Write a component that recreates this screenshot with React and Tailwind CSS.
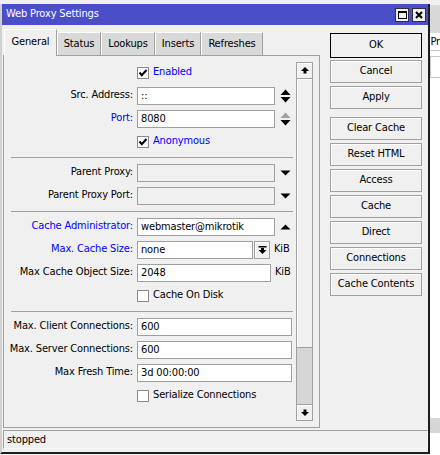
// Winbox-style "Web Proxy Settings" dialog

function Check({ on }) {
  return (
    <div className="w-[12px] h-[12px] border border-[#8a8a8a] bg-white flex items-center justify-center">
      {on && (
        <svg width="10" height="10" viewBox="0 0 10 10">
          <polyline points="1.5,4.5 3.8,7.2 8.5,2" fill="none" stroke="#000" strokeWidth="2" />
        </svg>
      )}
    </div>
  );
}

function UpDown({ upGray }) {
  return (
    <svg width="11" height="14" viewBox="0 0 11 14">
      <polygon points="0.5,6 5.5,0.5 10.5,6" fill={upGray ? "#a0a0a0" : "#000"} />
      <polygon points="0.5,8 5.5,13.5 10.5,8" fill="#000" />
    </svg>
  );
}

function Tri({ down }) {
  return (
    <svg width="11" height="6" viewBox="0 0 11 6">
      {down ? <polygon points="0.5,0.5 10.5,0.5 5.5,5.5" fill="#000" /> : <polygon points="0.5,5.5 10.5,5.5 5.5,0.5" fill="#000" />}
    </svg>
  );
}

function ScrollArrow({ down }) {
  return (
    <svg width="8" height="7" viewBox="0 0 8 7" className={down ? "rotate-180" : ""}>
      <polygon points="0,4 4,0 8,4" fill="#000" />
      <rect x="2.5" y="3.5" width="3" height="3" fill="#000" />
    </svg>
  );
}

function Label({ children, blue }) {
  return (
    <div className={`w-[129px] text-right whitespace-nowrap ${blue ? "text-[#0000ff]" : "text-black"}`}>{children}</div>
  );
}

function Field({ className, value, disabled }) {
  return (
    <div
      className={`h-[18px] border border-[#a0a0a0] px-[3px] leading-[16px] whitespace-nowrap overflow-hidden ${
        disabled ? "bg-[#f0f0f0]" : "bg-white"
      } ${className}`}
    >
      {value}
    </div>
  );
}

function CheckRow({ label, on, blue }) {
  return (
    <div className="flex items-center h-[23px]">
      <div className="w-[133px]" />
      <Check on={on} />
      <span className={`ml-[4px] ${blue ? "text-[#0000ff]" : "text-black"}`}>{label}</span>
    </div>
  );
}

function Sep() {
  return (
    <div className="h-[8px] flex items-center">
      <div className="ml-[7px] w-[282px] h-[1px] bg-[#a0a0a0]" />
    </div>
  );
}

function Btn({ children, ok, className = "" }) {
  return (
    <div
      className={`flex items-center justify-center bg-[#f0f0f0] border ${
        ok ? "h-[25px] border-black" : "h-[23px] border-[#a0a0a0] shadow-[inset_1px_1px_0_#fff]"
      } ${className}`}
    >
      {children}
    </div>
  );
}

export default function App() {
  const tabs = [
    { name: "Status", w: "w-[44px]" },
    { name: "Lookups", w: "w-[54px]" },
    { name: "Inserts", w: "w-[46px]" },
    { name: "Refreshes", w: "w-[62px]" },
  ];

  return (
    <div className="w-[440px] h-[455px] overflow-hidden bg-[#f0f0f0] flex font-['DejaVu_Sans_Condensed','DejaVu_Sans',sans-serif] text-[11px] tracking-[-0.15px] text-black">
      {/* dialog window */}
      <div className="mt-[4px] w-[433px] h-[450px] flex flex-col bg-[#f0f0f0] border-l-2 border-l-[#d0d0d0] border-r-2 border-r-[#1e1e1e] border-b-2 border-b-[#1e1e1e]">
        {/* title bar */}
        <div className="h-[21px] bg-[#4a4ec8] flex items-center pl-[4px] pr-[2px]">
          <span className="text-white flex-1">Web Proxy Settings</span>
          <div className="w-[14px] h-[14px] bg-[#f0f0f0] border border-[#303030] flex items-center justify-center">
            <div className="w-[9px] h-[8px] border border-black border-t-2" />
          </div>
          <div className="ml-[3px] w-[14px] h-[14px] bg-[#f0f0f0] border border-[#303030] flex items-center justify-center">
            <svg width="8" height="8" viewBox="0 0 8 8">
              <path d="M1 1 L7 7 M7 1 L1 7" stroke="#000" strokeWidth="2" />
            </svg>
          </div>
        </div>

        {/* main area */}
        <div className="h-[403px] flex pl-[1px]">
          <div className="w-[317px] flex flex-col pt-[4px]">
            {/* tabs */}
            <div className="h-[26px] flex pl-[1px] items-start">
              <div className="relative z-10 w-[53px] h-[27px] bg-[#f0f0f0] border-l border-t border-white border-r border-r-[#a0a0a0] flex items-center justify-center pb-[1px]">
                General
              </div>
              {tabs.map((t) => (
                <div
                  key={t.name}
                  className={`${t.w} mt-[3px] h-[23px] bg-[#d9d9d9] border-l border-t border-white border-r border-r-[#a0a0a0] flex items-center justify-center`}
                >
                  {t.name}
                </div>
              ))}
            </div>

            {/* panel */}
            <div className="h-[373px] border border-[#a0a0a0] flex">
              <div className="w-[292px] flex flex-col pt-[5px]">
                <CheckRow label="Enabled" on blue />
                <div className="flex items-center h-[23px]">
                  <Label>Src. Address:</Label>
                  <Field className="ml-[4px] w-[138px]" value="::" />
                  <div className="ml-[5px] flex">
                    <UpDown />
                  </div>
                </div>
                <div className="flex items-center h-[23px]">
                  <Label blue>Port:</Label>
                  <Field className="ml-[4px] w-[138px]" value="8080" />
                  <div className="ml-[5px] flex">
                    <UpDown upGray />
                  </div>
                </div>
                <CheckRow label="Anonymous" on blue />
                <Sep />
                <div className="flex items-center h-[23px]">
                  <Label>Parent Proxy:</Label>
                  <Field className="ml-[4px] w-[138px]" value="" disabled />
                  <div className="ml-[5px] flex">
                    <Tri down />
                  </div>
                </div>
                <div className="flex items-center h-[23px]">
                  <Label>Parent Proxy Port:</Label>
                  <Field className="ml-[4px] w-[138px]" value="" disabled />
                  <div className="ml-[5px] flex">
                    <Tri down />
                  </div>
                </div>
                <Sep />
                <div className="flex items-center h-[23px]">
                  <Label blue>Cache Administrator:</Label>
                  <Field className="ml-[4px] w-[138px]" value="webmaster@mikrotik" />
                  <div className="ml-[5px] flex">
                    <Tri />
                  </div>
                </div>
                <div className="flex items-center h-[23px]">
                  <Label blue>Max. Cache Size:</Label>
                  <Field className="ml-[4px] w-[116px]" value="none" />
                  <div className="ml-[1px] w-[16px] h-[18px] border border-[#a0a0a0] bg-[#f0f0f0] shadow-[inset_1px_1px_0_#fff] flex items-center justify-center">
                    <svg width="9" height="8" viewBox="0 0 9 8">
                      <rect x="0.5" y="0" width="8" height="1.5" fill="#000" />
                      <rect x="3" y="2" width="3" height="2.5" fill="#000" />
                      <polygon points="0.5,4 8.5,4 4.5,8" fill="#000" />
                    </svg>
                  </div>
                  <span className="ml-[4px]">KiB</span>
                </div>
                <div className="flex items-center h-[23px]">
                  <Label>Max Cache Object Size:</Label>
                  <Field className="ml-[4px] w-[134px]" value="2048" />
                  <span className="ml-[4px]">KiB</span>
                </div>
                <CheckRow label="Cache On Disk" />
                <Sep />
                <div className="flex items-center h-[23px]">
                  <Label>Max. Client Connections:</Label>
                  <Field className="ml-[4px] w-[155px]" value="600" />
                </div>
                <div className="flex items-center h-[23px]">
                  <Label>Max. Server Connections:</Label>
                  <Field className="ml-[4px] w-[155px]" value="600" />
                </div>
                <div className="flex items-center h-[23px]">
                  <Label>Max Fresh Time:</Label>
                  <Field className="ml-[4px] w-[155px]" value="3d 00:00:00" />
                </div>
                <CheckRow label="Serialize Connections" />
              </div>

              {/* scrollbar */}
              <div className="w-[17px] h-[359px] mt-[6px] flex flex-col border border-[#a0a0a0] bg-[#d6d6d6]">
                <div className="h-[16px] bg-[#f0f0f0] border-b border-[#a0a0a0] shadow-[inset_1px_1px_0_#fff] flex items-center justify-center">
                  <ScrollArrow />
                </div>
                <div className="h-[269px] bg-[#f0f0f0] border-b border-[#a0a0a0] shadow-[inset_1px_1px_0_#fff]" />
                <div className="flex-1" />
                <div className="h-[16px] bg-[#f0f0f0] border-t border-[#a0a0a0] shadow-[inset_1px_1px_0_#fff] flex items-center justify-center">
                  <ScrollArrow down />
                </div>
              </div>
            </div>
          </div>

          {/* buttons */}
          <div className="ml-[10px] w-[92px] flex flex-col pt-[8px]">
            <Btn ok className="mb-[2px]">OK</Btn>
            <Btn className="mb-[3px]">Cancel</Btn>
            <Btn className="mb-[8px]">Apply</Btn>
            <Btn className="mb-[3px]">Clear Cache</Btn>
            <Btn className="mb-[3px]">Reset HTML</Btn>
            <Btn className="mb-[3px]">Access</Btn>
            <Btn className="mb-[3px]">Cache</Btn>
            <Btn className="mb-[3px]">Direct</Btn>
            <Btn className="mb-[3px]">Connections</Btn>
            <Btn>Cache Contents</Btn>
          </div>
        </div>

        {/* status bar */}
        <div className="h-[24px] pt-[2px] pl-[1px]">
          <div className="w-[425px] h-[19px] border border-[#a0a0a0] border-b-[#f8f8f8] border-r-[#f8f8f8] pl-[3px] leading-[17px]">
            stopped
          </div>
        </div>
      </div>

      {/* window behind */}
      <div className="flex-1 flex flex-col bg-white">
        <div className="h-[5px] bg-[#f0f0f0]" />
        <div className="h-[28px] bg-[#d8d8d8]" />
        <div className="h-[17px] leading-[17px] whitespace-nowrap overflow-hidden">Pr</div>
        <div className="h-[1px] bg-[#c8c8c8]" />
        <div className="h-[5px]" />
        <div className="h-[22px] border border-[#c8c8c8] border-r-0" />
        <div className="h-[340px]" />
        <div className="h-[15px] bg-[#d6d6d6]" />
        <div className="flex-1" />
      </div>
    </div>
  );
}
